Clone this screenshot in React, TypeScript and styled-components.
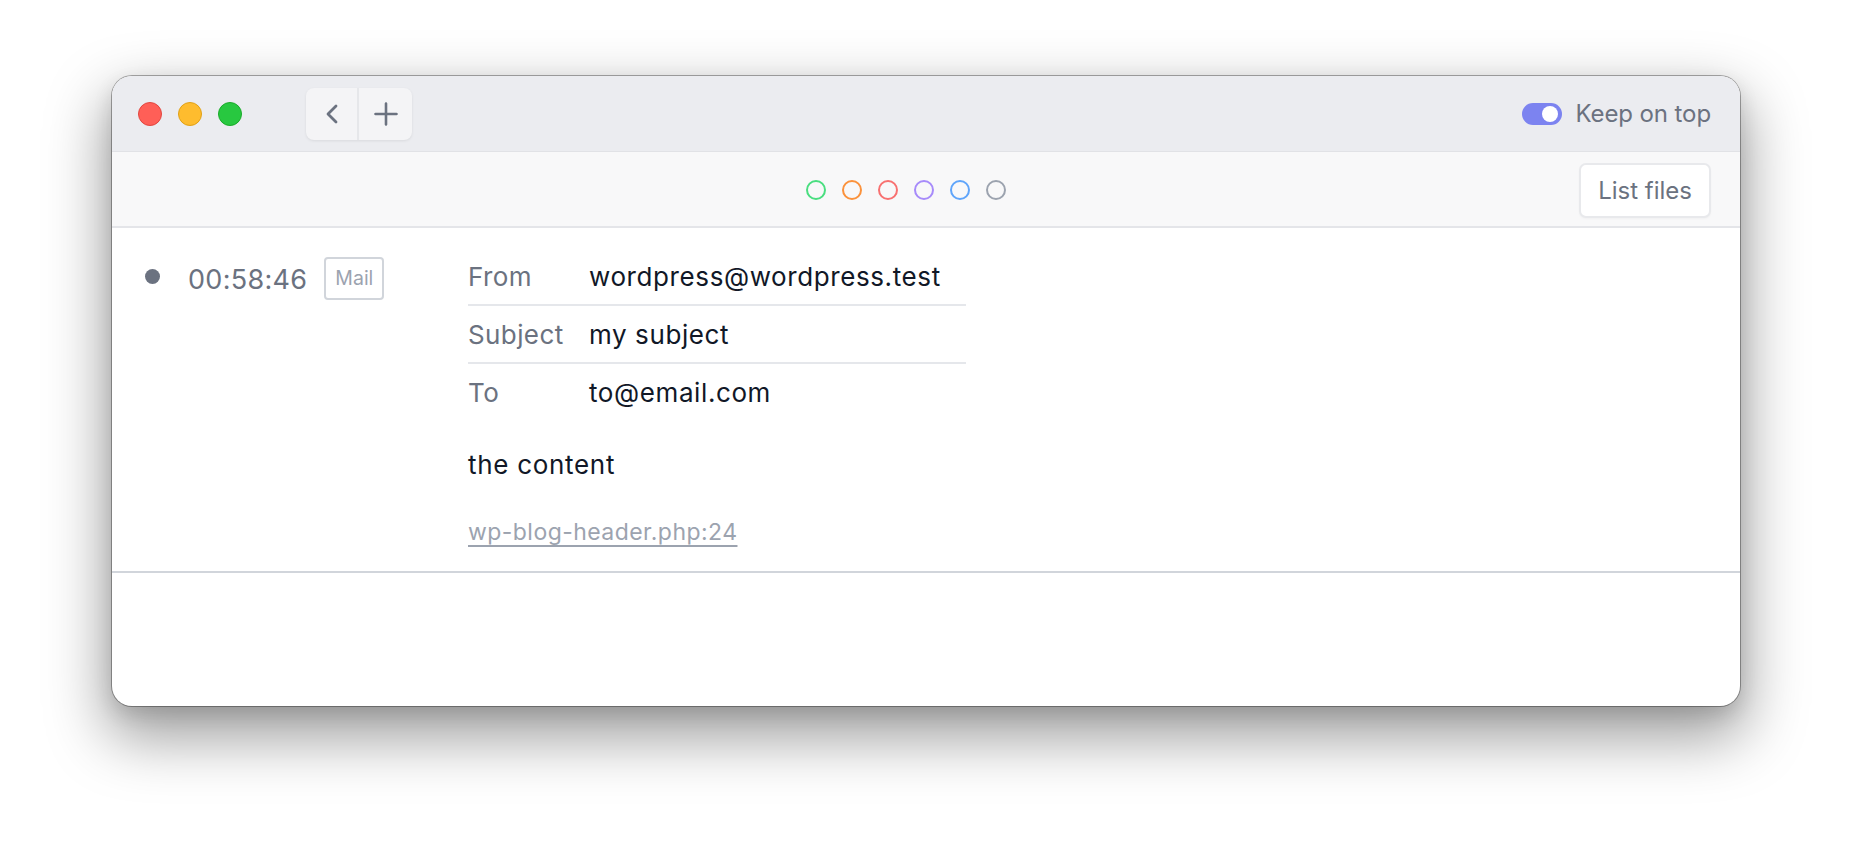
import React from "react";
import styled, { createGlobalStyle } from "styled-components";

const Global = createGlobalStyle`
  html, body { margin: 0; padding: 0; background: #ffffff; }
  body { font-family: Inter, "Noto Sans", "Liberation Sans", sans-serif; -webkit-font-smoothing: antialiased; }
  * { box-sizing: border-box; }
`;

const Stage = styled.div`
  width: 1852px;
  height: 854px;
  padding: 76px 112px 148px;
  background: #ffffff;
`;

const Window = styled.div`
  width: 1628px;
  height: 630px;
  border-radius: 20px;
  background: #ffffff;
  overflow: hidden;
  display: flex;
  flex-direction: column;
  box-shadow: 0 0 0 1px rgba(0, 0, 0, 0.32), 0 26px 60px 6px rgba(0, 0, 0, 0.38),
    0 8px 20px rgba(0, 0, 0, 0.12);
`;

const TitleBar = styled.div`
  height: 76px;
  flex: none;
  display: flex;
  align-items: center;
  padding: 0 29px 0 26px;
  background: #ebecf0;
  border-bottom: 1px solid #e1e2e6;
`;

const Lights = styled.div`
  display: flex;
  gap: 16px;
`;

const Light = styled.span<{ $c: string; $b: string }>`
  width: 24px;
  height: 24px;
  border-radius: 50%;
  background: ${(p) => p.$c};
  border: 1px solid ${(p) => p.$b};
`;

const NavGroup = styled.div`
  margin-left: 64px;
  display: flex;
  height: 52px;
  border-radius: 8px;
  background: #f4f4f6;
  box-shadow: 0 1px 3px rgba(0, 0, 0, 0.08);
  overflow: hidden;
`;

const NavButton = styled.button<{ $divider?: boolean }>`
  width: 53px;
  height: 52px;
  border: none;
  padding: 0;
  background: transparent;
  display: flex;
  align-items: center;
  justify-content: center;
  color: #6b7280;
  border-right: ${(p) => (p.$divider ? "2px solid #e6e7ea" : "none")};
`;

const Spacer = styled.div`
  flex: 1;
`;

const KeepOnTop = styled.label`
  display: flex;
  align-items: center;
  gap: 13px;
  font-size: 24px;
  color: #6b7280;
  letter-spacing: -0.1px;
`;

const Switch = styled.span`
  position: relative;
  width: 40px;
  height: 22px;
  border-radius: 11px;
  background: #7c83f0;
`;

const Knob = styled.span`
  position: absolute;
  top: 3px;
  right: 4px;
  width: 16px;
  height: 16px;
  border-radius: 50%;
  background: #ffffff;
`;

const Toolbar = styled.div`
  height: 76px;
  flex: none;
  display: flex;
  align-items: center;
  padding: 2px 29px 0 121px;
  background: #f8f8f9;
  border-bottom: 2px solid #e4e5e9;
`;

const Filters = styled.div`
  flex: 1;
  display: flex;
  justify-content: center;
  gap: 16px;
`;

const Ring = styled.span<{ $c: string }>`
  width: 20px;
  height: 20px;
  border-radius: 50%;
  border: 2px solid ${(p) => p.$c};
`;

const ListButton = styled.button`
  height: 55px;
  padding: 0 17px;
  border: 2px solid #e8e9ec;
  border-radius: 7px;
  background: #ffffff;
  font-family: inherit;
  font-size: 24px;
  color: #6b7280;
  box-shadow: 0 1px 2px rgba(0, 0, 0, 0.03);
`;

const Content = styled.div`
  flex: 1;
  display: flex;
  flex-direction: column;
`;

const Entry = styled.div`
  display: flex;
  padding: 20px 29px 24px 32px;
  border-bottom: 2px solid #d1d5db;
`;

const Meta = styled.div`
  width: 324px;
  flex: none;
  height: 56px;
  display: flex;
  align-items: center;
`;

const Dot = styled.span`
  width: 15px;
  height: 15px;
  border-radius: 50%;
  background: #6b7280;
  margin-left: 1px;
`;

const Time = styled.span`
  margin-left: 28px;
  font-size: 27px;
  color: #6b7280;
  letter-spacing: 0.3px;
  position: relative;
  top: 3px;
`;

const Badge = styled.span`
  margin-left: 17px;
  height: 43px;
  padding: 0 9px;
  display: flex;
  align-items: center;
  border: 2px solid #d1d5db;
  border-radius: 4px;
  font-size: 19.5px;
  color: #9ca3af;
  position: relative;
  top: 2px;
`;

const Main = styled.div`
  display: flex;
  flex-direction: column;
`;

const Fields = styled.div`
  width: 498px;
  display: flex;
  flex-direction: column;
`;

const Field = styled.div`
  display: grid;
  grid-template-columns: 121px 1fr;
  align-items: center;
  height: 58px;
  border-bottom: 2px solid #e5e7eb;
  &:last-child {
    border-bottom: none;
    height: 56px;
  }
`;

const Label = styled.span`
  font-size: 26px;
  color: #6b7280;
  letter-spacing: 0.4px;
`;

const Value = styled.span`
  font-size: 26px;
  color: #111827;
  letter-spacing: 0.6px;
`;

const Body = styled.p`
  margin: 27px 0 0;
  font-size: 26px;
  line-height: 36px;
  color: #111827;
  letter-spacing: 0.7px;
`;

const Source = styled.a`
  margin-top: 34px;
  font-size: 23px;
  line-height: 30px;
  color: #9ca3af;
  letter-spacing: 0.45px;
  text-decoration: underline;
  text-decoration-thickness: 2px;
  text-underline-offset: 5px;
  align-self: flex-start;
`;

const ChevronLeft = () => (
  <svg width="14" height="20" viewBox="0 0 14 20" fill="none">
    <polyline points="11,2 3,10 11,18" stroke="currentColor" strokeWidth="2.8" strokeLinecap="round" strokeLinejoin="round" />
  </svg>
);

const PlusIcon = () => (
  <svg width="24" height="24" viewBox="0 0 24 24" fill="none">
    <path d="M12 1.5v21M1.5 12h21" stroke="currentColor" strokeWidth="2.6" strokeLinecap="round" />
  </svg>
);

const rings = ["#4ade80", "#fb923c", "#f87171", "#a78bfa", "#60a5fa", "#9ca3af"];

export default function App() {
  return (
    <>
      <Global />
      <Stage>
        <Window>
          <TitleBar>
            <Lights>
              <Light $c="#ff5f57" $b="#e2463f" />
              <Light $c="#febc2e" $b="#e1a116" />
              <Light $c="#28c840" $b="#1aab29" />
            </Lights>
            <NavGroup>
              <NavButton $divider>
                <ChevronLeft />
              </NavButton>
              <NavButton>
                <PlusIcon />
              </NavButton>
            </NavGroup>
            <Spacer />
            <KeepOnTop>
              <Switch>
                <Knob />
              </Switch>
              Keep on top
            </KeepOnTop>
          </TitleBar>
          <Toolbar>
            <Filters>
              {rings.map((c) => (
                <Ring key={c} $c={c} />
              ))}
            </Filters>
            <ListButton>List files</ListButton>
          </Toolbar>
          <Content>
            <Entry>
              <Meta>
                <Dot />
                <Time>00:58:46</Time>
                <Badge>Mail</Badge>
              </Meta>
              <Main>
                <Fields>
                  <Field>
                    <Label>From</Label>
                    <Value>wordpress@wordpress.test</Value>
                  </Field>
                  <Field>
                    <Label>Subject</Label>
                    <Value>my subject</Value>
                  </Field>
                  <Field>
                    <Label>To</Label>
                    <Value>to@email.com</Value>
                  </Field>
                </Fields>
                <Body>the content</Body>
                <Source>wp-blog-header.php:24</Source>
              </Main>
            </Entry>
          </Content>
        </Window>
      </Stage>
    </>
  );
}
